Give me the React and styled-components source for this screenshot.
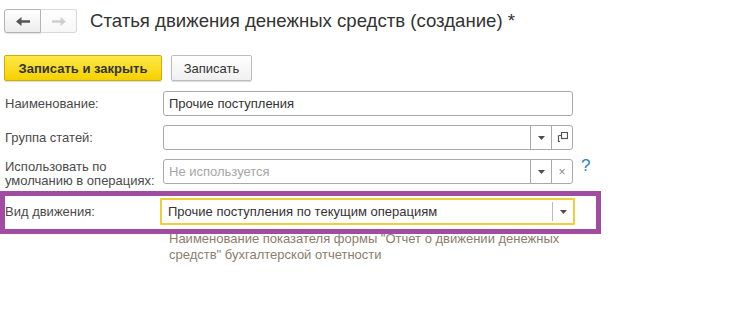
import React from "react";
import styled, { createGlobalStyle } from "styled-components";

const Global = createGlobalStyle`
  html, body { margin: 0; padding: 0; background: #fff; }
  body { font-family: "Liberation Sans", Arial, sans-serif; color: #333; }
  * { box-sizing: border-box; }
`;

const Page = styled.div`
  position: relative;
  width: 745px;
  height: 319px;
  background: #fff;
  overflow: hidden;
`;

const Header = styled.div`
  display: flex;
  align-items: center;
  padding: 9px 0 0 4px;
`;

const NavGroup = styled.div`
  display: flex;
  height: 24px;
`;

const NavButton = styled.div`
  width: ${(p) => (p.$first ? 37 : 36)}px;
  height: 24px;
  display: flex;
  align-items: center;
  justify-content: center;
  border: 1px solid ${(p) => (p.$disabled ? "#d8d8d8" : "#b3b3b3")};
  border-left-width: ${(p) => (p.$first ? 1 : 0)}px;
  border-radius: ${(p) => (p.$first ? "3px 0 0 3px" : "0 3px 3px 0")};
  background: ${(p) =>
    p.$disabled ? "linear-gradient(#ffffff, #f7f7f7)" : "linear-gradient(#ffffff, #ececec)"};
  box-shadow: ${(p) => (p.$disabled ? "none" : "0 1px 1px rgba(0,0,0,0.12)")};
`;

const Title = styled.h1`
  margin: 0 0 0 13px;
  font-size: 18.6px;
  font-weight: normal;
  color: #333;
  line-height: 22px;
`;

const Toolbar = styled.div`
  display: flex;
  gap: 9px;
  padding: 0 0 0 4px;
  margin-top: 22px;
`;

const Button = styled.div`
  height: 26px;
  width: ${(p) => p.$w}px;
  display: flex;
  align-items: center;
  justify-content: center;
  font-size: 13px;
  border-radius: 2px;
  color: #333;
  font-weight: ${(p) => (p.$primary ? "bold" : "normal")};
  border: 1px solid ${(p) => (p.$primary ? "#cfae00" : "#bdbdbd")};
  background: ${(p) =>
    p.$primary ? "linear-gradient(#ffe94a, #f5d000)" : "linear-gradient(#ffffff, #f0f0f0)"};
  box-shadow: 0 1px 1px rgba(0, 0, 0, 0.15);
`;

const Form = styled.div`
  display: grid;
  grid-template-columns: 158px 410px 30px;
  row-gap: 9px;
  padding-left: 5px;
  margin-top: 10px;
  align-items: start;
`;

const Label = styled.div`
  grid-column: 1;
  font-size: 13px;
  color: #4a4a4a;
  line-height: ${(p) => (p.$multi ? 14 : 15)}px;
  padding-top: ${(p) => (p.$multi ? 1 : p.$focusRow ? 7 : 5)}px;
  padding-right: 6px;
`;

const Field = styled.div`
  grid-column: 2;
  height: ${(p) => (p.$focused ? 27 : 25)}px;
  display: flex;
  align-items: stretch;
  border: ${(p) => (p.$focused ? "2px solid #f0cd3c" : "1px solid #a9a9a9")};
  border-radius: ${(p) => (p.$focused ? 1 : 3)}px;
  background: #fff;
  margin: ${(p) => (p.$focused ? "1px -2px 0 -3px" : "0")};
`;

const FieldText = styled.div`
  flex: 1;
  display: flex;
  align-items: center;
  padding-left: ${(p) => (p.$focused ? 6 : 5)}px;
  font-size: 13px;
  color: ${(p) => (p.$placeholder ? "#a6a6a6" : "#333")};
  white-space: nowrap;
  overflow: hidden;
`;

const FieldButton = styled.div`
  width: ${(p) => p.$w || 21}px;
  display: flex;
  align-items: center;
  justify-content: center;
  border-left: 1px solid ${(p) => (p.$soft ? "#bdbdbd" : "#a9a9a9")};
  margin: ${(p) => (p.$soft ? "2px 0" : "0")};
  color: #8a8a8a;
  font-size: 12px;
`;

const Help = styled.div`
  grid-column: 3;
  padding-left: 8px;
  font-size: 17px;
  line-height: 16px;
  color: #2a84c6;
  margin-top: -1px;
`;

const Hint = styled.div`
  grid-column: 2 / span 2;
  margin-top: -3px;
  padding-left: 6px;
  max-width: 420px;
  font-size: 13px;
  line-height: 16px;
  color: #8a7e6d;
`;

const Highlight = styled.div`
  position: absolute;
  left: 0;
  top: 191px;
  width: 601px;
  height: 43px;
  border: 5px solid #a04ca0;
  pointer-events: none;
`;

const ArrowLeft = ({ color }) => (
  <svg width="14" height="9" viewBox="0 0 14 9">
    <path d="M0 4.5 L5.5 0 L5.5 3.3 L14 3.3 L14 5.7 L5.5 5.7 L5.5 9 Z" fill={color} />
  </svg>
);

const ArrowRight = ({ color }) => (
  <svg width="14" height="9" viewBox="0 0 14 9">
    <path d="M14 4.5 L8.5 0 L8.5 3.3 L0 3.3 L0 5.7 L8.5 5.7 L8.5 9 Z" fill={color} />
  </svg>
);

const Drop = () => (
  <svg width="7" height="4" viewBox="0 0 7 4">
    <path d="M0 0 L7 0 L3.5 4 Z" fill="#4d4d4d" />
  </svg>
);

const OpenIcon = () => (
  <svg width="11" height="11" viewBox="0 0 11 11">
    <rect x="4.5" y="0.5" width="6" height="6" fill="none" stroke="#555" strokeWidth="1.2" />
    <path d="M1.5 3.5 H4 M1.5 3.5 V10" fill="none" stroke="#555" strokeWidth="1.2" />
    <path d="M1.5 9.5 H3" fill="none" stroke="#555" strokeWidth="1.2" />
  </svg>
);

export default function App() {
  return (
    <Page>
      <Global />
      <Header>
        <NavGroup>
          <NavButton $first>
            <ArrowLeft color="#555" />
          </NavButton>
          <NavButton $disabled>
            <ArrowRight color="#cfcfcf" />
          </NavButton>
        </NavGroup>
        <Title>Статья движения денежных средств (создание) *</Title>
      </Header>
      <Toolbar>
        <Button $primary $w={158}>Записать и закрыть</Button>
        <Button $w={81}>Записать</Button>
      </Toolbar>
      <Form>
        <Label>Наименование:</Label>
        <Field>
          <FieldText>Прочие поступления</FieldText>
        </Field>

        <Label>Группа статей:</Label>
        <Field>
          <FieldText />
          <FieldButton>
            <Drop />
          </FieldButton>
          <FieldButton>
            <OpenIcon />
          </FieldButton>
        </Field>

        <Label $multi>Использовать по умолчанию в операциях:</Label>
        <Field>
          <FieldText $placeholder>Не используется</FieldText>
          <FieldButton>
            <Drop />
          </FieldButton>
          <FieldButton>×</FieldButton>
        </Field>
        <Help>?</Help>

        <Label $focusRow>Вид движения:</Label>
        <Field $focused>
          <FieldText $focused>Прочие поступления по текущим операциям</FieldText>
          <FieldButton $soft $w={21}>
            <Drop />
          </FieldButton>
        </Field>

        <Hint>
          Наименование показателя формы "Отчет о движении денежных средств" бухгалтерской
          отчетности
        </Hint>
      </Form>
      <Highlight />
    </Page>
  );
}
